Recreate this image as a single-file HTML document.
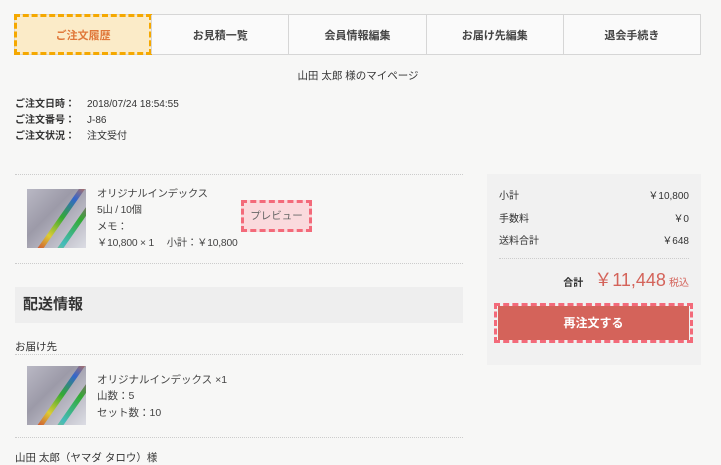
<!DOCTYPE html>
<html><head><meta charset="utf-8"><style>
*{margin:0;padding:0;box-sizing:border-box}
body{width:721px;height:459px;overflow:hidden;background:#f7f7f6;font-family:"Liberation Sans","Noto Sans CJK JP",sans-serif;color:#333;position:relative;font-size:11px}
.a{position:absolute;white-space:nowrap}
.nav{position:absolute;left:14px;top:14px;width:687px;height:41px;border:1px solid #d6d6d6;display:flex;background:#fafafa}
.nav div{flex:1;display:flex;align-items:center;justify-content:center;font-size:11px;font-weight:bold;color:#444;border-left:1px solid #d6d6d6}
.nav div:first-child{border-left:none;background:#fbebc8;color:#e0783a;outline:3px dashed #f5a800;outline-offset:-2px}
.dl{position:absolute;left:15px;width:448px;border-top:1px dotted #ccc}
.img{position:absolute;width:59px;height:59px;background:linear-gradient(135deg,#b9b8c4 0%,#9c9aa8 40%,#dcdde4 100%);overflow:hidden}
.img:before{content:"";position:absolute;left:-10px;top:26px;width:90px;height:5px;background:linear-gradient(90deg,#c33,#dc3,#3a3,#36c,#e73);transform:rotate(-55deg)}
.img:after{content:"";position:absolute;left:0;top:40px;width:90px;height:5px;background:linear-gradient(90deg,#dc3,#4bb,#3a3,#c3a);transform:rotate(-55deg)}
.sum{position:absolute;left:487px;top:174px;width:214px;height:191px;background:#f1f1f1}
</style></head><body>
<div class="nav"><div>ご注文履歴</div><div>お見積一覧</div><div>会員情報編集</div><div>お届け先編集</div><div>退会手続き</div></div>
<div class="a" style="left:0;width:716px;text-align:center;top:68px;font-size:10.5px">山田 太郎 様のマイページ</div>
<div class="a" style="left:15px;top:97px;font-weight:bold;font-size:10px;line-height:16px">ご注文日時：<br>ご注文番号：<br>ご注文状況：</div>
<div class="a" style="left:87px;top:97px;font-size:10px;line-height:16px">2018/07/24 18:54:55<br>J-86<br>注文受付</div>
<div class="dl" style="top:174px"></div>
<div class="img" style="left:27px;top:189px"></div>
<div class="a" style="left:97px;top:187px;font-size:10.3px;line-height:16.3px;color:#444;letter-spacing:-0.2px">オリジナルインデックス<br>5山 / 10個<br>メモ：<br>￥10,800 × 1　 小計：￥10,800</div>
<div class="a" style="left:241px;top:200px;width:71px;height:32px;background:#fadadd;outline:3px dashed #f36a7a;outline-offset:-3px;text-align:center;line-height:32px;font-size:10.5px;color:#666">プレビュー</div>
<div class="dl" style="top:263px"></div>
<div class="a" style="left:15px;top:287px;width:448px;height:36px;background:#eeeeee;font-size:15px;font-weight:bold;line-height:36px;padding-left:8px">配送情報</div>
<div class="sum"></div>
<div class="a" style="left:499px;top:186px;font-size:10px;line-height:22.5px">小計<br>手数料<br>送料合計</div>
<div class="a" style="left:600px;width:89px;text-align:right;top:186px;font-size:10px;line-height:22.5px">￥10,800<br>￥0<br>￥648</div>
<div class="a" style="left:499px;top:258px;width:190px;border-top:1px dotted #ccc"></div>
<div class="a" style="left:540px;width:149px;text-align:right;top:266px;color:#d4635a"><span style="color:#333;font-weight:bold;font-size:10px">合計</span>　<span style="font-size:18px">￥11,448</span> <span style="font-size:10px">税込</span></div>
<div class="a" style="left:494px;top:303px;width:199px;height:40px;outline:3px dashed #f36a7a;outline-offset:-3px"></div>
<div class="a" style="left:498px;top:306px;width:191px;height:34px;background:#d4635a;color:#fff;text-align:center;line-height:34px;font-size:12px;font-weight:bold">再注文する</div>
<div class="a" style="left:15px;top:339px;font-size:10.5px">お届け先</div>
<div class="dl" style="top:354px"></div>
<div class="img" style="left:27px;top:366px"></div>
<div class="a" style="left:97px;top:372px;font-size:10.5px;line-height:16.3px;color:#444">オリジナルインデックス ×1<br>山数：5<br>セット数：10</div>
<div class="dl" style="top:437px"></div>
<div class="a" style="left:15px;top:450px;font-size:10.5px">山田 太郎（ヤマダ タロウ）様</div>
</body></html>
